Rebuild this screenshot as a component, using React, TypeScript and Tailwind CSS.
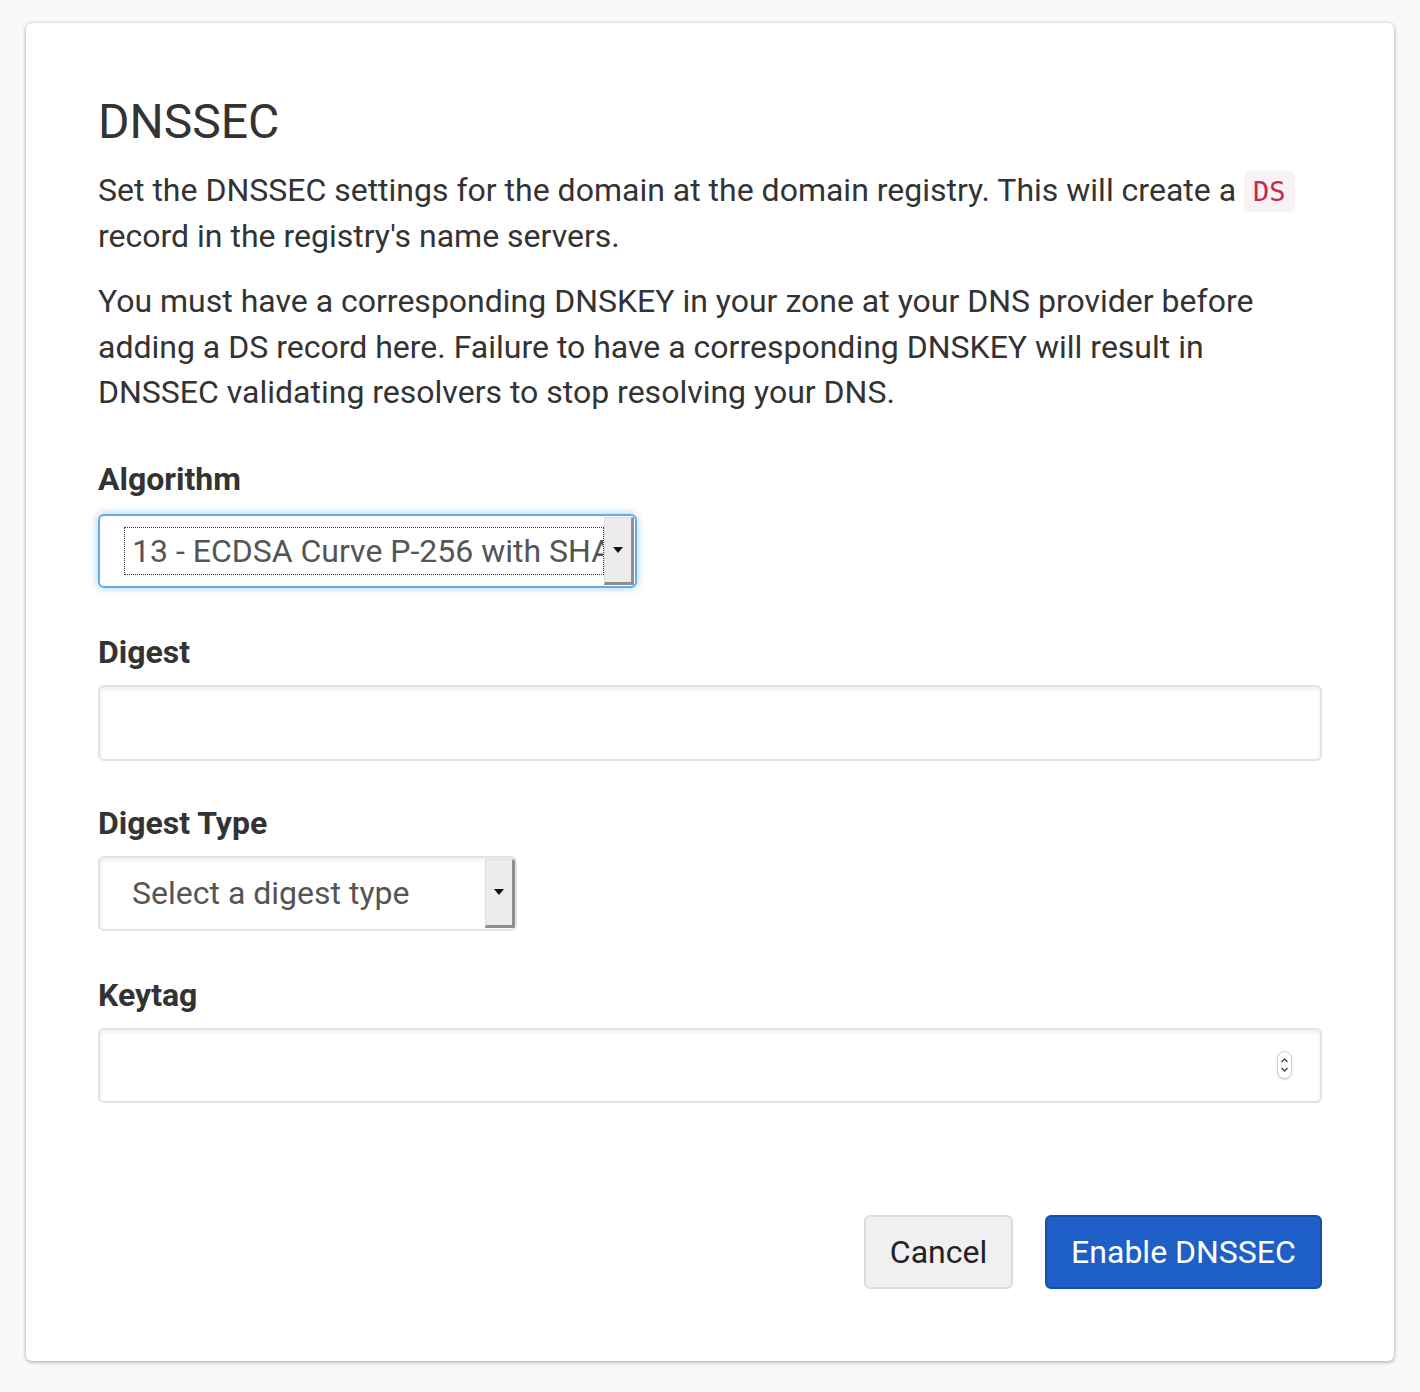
const Arrow = () => (
  <svg width="10" height="6" viewBox="0 0 10 6" className="block">
    <path d="M0 0 L10 0 L5 6 Z" fill="#111" />
  </svg>
);

const SelectButton = () => (
  <div className="flex w-[30px] shrink-0 items-center justify-center border-r-[3px] border-b-[3px] border-l border-t border-r-[#8f8f8f] border-b-[#8f8f8f] border-l-[#dcdcdc] border-t-[#dcdcdc] bg-[#ececec]">
    <Arrow />
  </div>
);

const Label = ({ children }: { children: React.ReactNode }) => (
  <div className="flex h-10 items-center text-[32px] font-bold text-[#333]">{children}</div>
);

const inputBox =
  "rounded-[6px] border-2 border-[#e3e3e3] bg-white shadow-[inset_0_2px_4px_rgba(0,0,0,0.08)]";

export default function App() {
  return (
    <div className="min-h-[1392px] bg-[#f9f9f9] px-[26px] pt-[23px] pb-[31px] font-['Roboto',_'Liberation_Sans',_sans-serif]">
      <div className="rounded-[6px] bg-white px-[72px] pt-[72px] pb-[72px] shadow-[0_1px_4px_rgba(0,0,0,0.35)]">
        <h1 className="text-[48px] leading-[53px] font-normal text-[#333]">DNSSEC</h1>

        <p className="mt-[20px] text-[32px] leading-[45.5px] text-[#333]">
          Set the DNSSEC settings for the domain at the domain registry. This will create a{" "}
          <code className="inline-block rounded-[6px] bg-[#f9f2f4] px-[9px] leading-[41px] font-['DejaVu_Sans_Mono',_monospace] text-[27px] text-[#c7254e]">
            DS
          </code>{" "}
          record in the registry's name servers.
        </p>

        <p className="mt-[20px] text-[32px] leading-[45.5px] text-[#333]">
          You must have a corresponding DNSKEY in your zone at your DNS provider before adding a DS
          record here. Failure to have a corresponding DNSKEY will result in DNSSEC validating
          resolvers to stop resolving your DNS.
        </p>

        <div className="mt-[43px]">
          <Label>Algorithm</Label>
          <div className="mt-[15px] flex h-[74px] w-[539px] rounded-[6px] border-2 border-[#64aaea] bg-white p-[1px] shadow-[0_0_10px_rgba(102,175,233,0.6)]">
            <div className="flex min-w-0 flex-1 items-center overflow-hidden py-[10px] pl-[23px]">
              <div className="flex h-full w-full min-w-0 items-center overflow-hidden border border-dotted border-[#333] pl-[7px] whitespace-nowrap text-[32px] text-[#555]">
                <span>13 - ECDSA Curve P-256 with SHA-256</span>
              </div>
            </div>
            <SelectButton />
          </div>
        </div>

        <div className="mt-[44px]">
          <Label>Digest</Label>
          <div className={`mt-[13px] h-[76px] ${inputBox}`} />
        </div>

        <div className="mt-[42px]">
          <Label>Digest Type</Label>
          <div className={`mt-[13px] flex h-[75px] w-[419px] overflow-hidden ${inputBox} pr-0`}>
            <div className="flex flex-1 items-center pl-[32px] text-[32px] text-[#555]">
              Select a digest type
            </div>
            <div className="flex py-[1px]">
              <SelectButton />
            </div>
          </div>
        </div>

        <div className="mt-[44px]">
          <Label>Keytag</Label>
          <div className={`mt-[13px] flex h-[75px] items-center justify-end pr-[28px] ${inputBox}`}>
            <div className="flex h-[28px] w-[15px] flex-col items-center justify-center rounded-full border border-[#cfcfcf] bg-white shadow-[0_1px_2px_rgba(0,0,0,0.15)]">
              <svg width="9" height="18" viewBox="0 0 9 18">
                <path d="M1.5 6 L4.5 3 L7.5 6" fill="none" stroke="#444" strokeWidth="1.3" />
                <path d="M1.5 12 L4.5 15 L7.5 12" fill="none" stroke="#444" strokeWidth="1.3" />
              </svg>
            </div>
          </div>
        </div>

        <div className="mt-[112px] flex justify-end gap-[32px]">
          <button className="h-[74px] w-[149px] rounded-[6px] border-2 border-[#dcdcdc] bg-[#f0f0f0] text-[32px] text-[#222]">
            Cancel
          </button>
          <button className="h-[74px] w-[277px] rounded-[6px] border-2 border-[#184fa6] bg-[#1d5fc6] text-[32px] text-white">
            Enable DNSSEC
          </button>
        </div>
      </div>
    </div>
  );
}
